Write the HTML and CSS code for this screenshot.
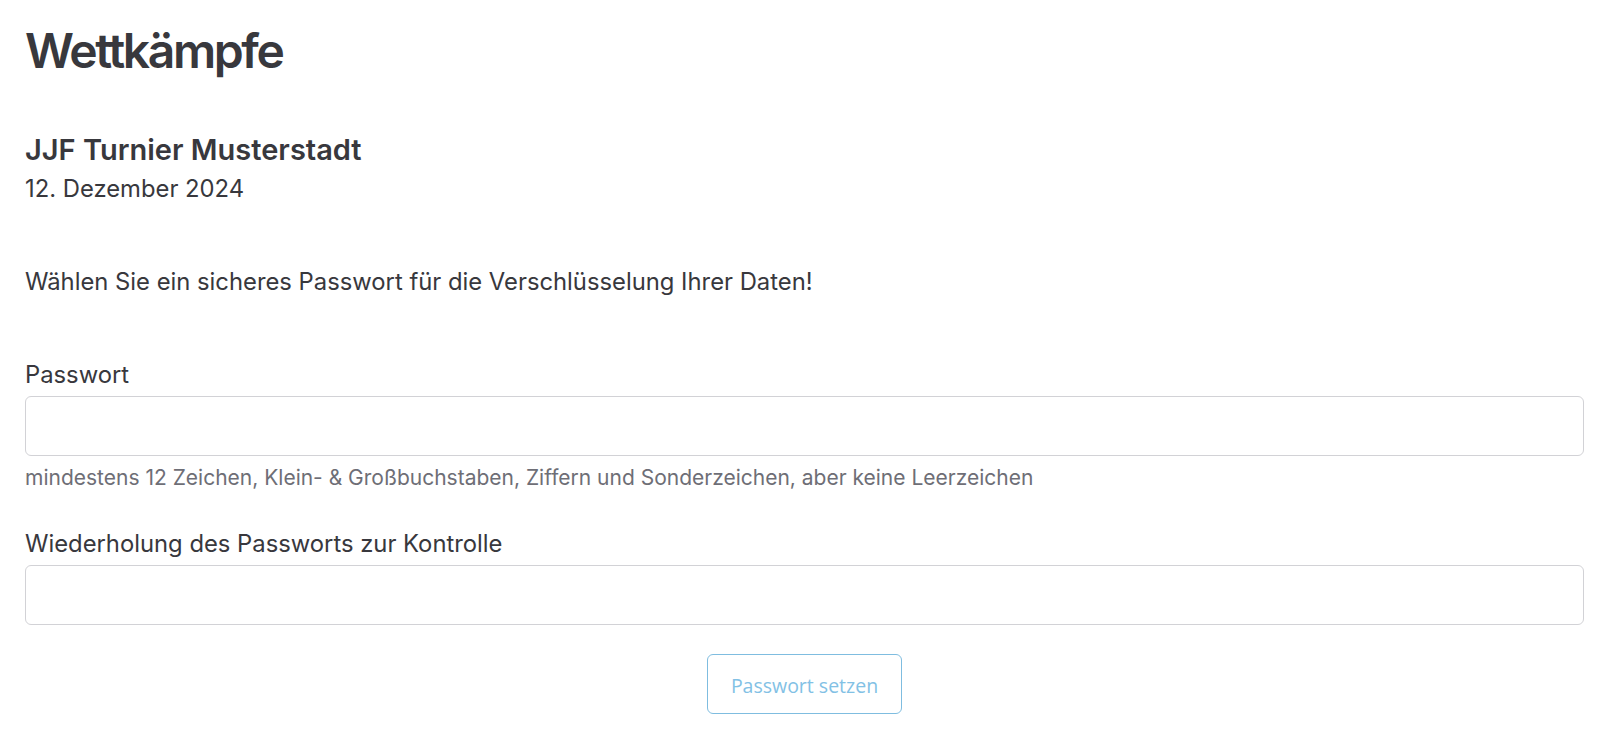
FILE: index.html
```html
<!DOCTYPE html>
<html lang="de">

<head>
    <meta charset="UTF-8">
    <meta name="viewport" content="width=device-width, initial-scale=1.0">
    <title>Wettkämpfe</title>
    <link rel="stylesheet" href="styles.css">
</head>

<body>
    <main class="page">
        <h1>Wettkämpfe</h1>

        <section class="event">
            <h2>JJF Turnier Musterstadt</h2>
            <div class="event-date">12. Dezember 2024</div>
        </section>

        <p class="intro">Wählen Sie ein sicheres Passwort für die Verschlüsselung Ihrer Daten!</p>

        <form class="password-form">
            <label for="password" class="form-label">Passwort</label>
            <input type="password" id="password" class="form-control">
            <div class="form-help">mindestens 12 Zeichen, Klein- &amp; Großbuchstaben, Ziffern und Sonderzeichen, aber keine Leerzeichen</div>

            <label for="password-repeat" class="form-label second">Wiederholung des Passworts zur Kontrolle</label>
            <input type="password" id="password-repeat" class="form-control">

            <div class="form-actions">
                <button type="submit" class="btn-submit" disabled>Passwort setzen</button>
            </div>
        </form>
    </main>
</body>

</html>
```

FILE: styles.css
```css
/* General Reset */
* {
    margin: 0;
    padding: 0;
    box-sizing: border-box;
}

body {
    font-family: Inter, "Noto Sans", sans-serif;
    background-color: #fff;
    color: #38383d;
}

.page {
    padding: 22px 37px 0 25px;
}

h1 {
    font-size: 48px;
    line-height: 58px;
    font-weight: 600;
    letter-spacing: -2.4px;
}

.event {
    margin-top: 53px;
}

.event h2 {
    font-size: 29px;
    line-height: 34px;
    font-weight: 600;
}

.event-date {
    margin-top: 8px;
    font-size: 23.8px;
    line-height: 28px;
}

.intro {
    margin-top: 65px;
    font-size: 23.8px;
    line-height: 28px;
}

.password-form {
    display: flex;
    flex-direction: column;
    margin-top: 65px;
}

.form-label {
    font-size: 23.8px;
    line-height: 28px;
}

.form-label.second {
    margin-top: 40px;
}

.form-control {
    margin-top: 7px;
    height: 60px;
    width: 100%;
    border: 1px solid #d2d2d6;
    border-radius: 6px;
    background-color: #fff;
    padding: 0 16px;
    font: inherit;
}

.form-help {
    margin-top: 9px;
    font-size: 21px;
    line-height: 25px;
    color: #6e6e76;
}

.form-actions {
    display: flex;
    justify-content: center;
    margin-top: 29px;
}

.btn-submit {
    width: 195px;
    height: 60px;
    border: 1px solid #7fbde0;
    border-radius: 6px;
    background-color: #fff;
    color: #82c1e5;
    font-family: "Open Sans", "Noto Sans", sans-serif;
    font-size: 19.5px;
    padding-top: 2px;
}
```
